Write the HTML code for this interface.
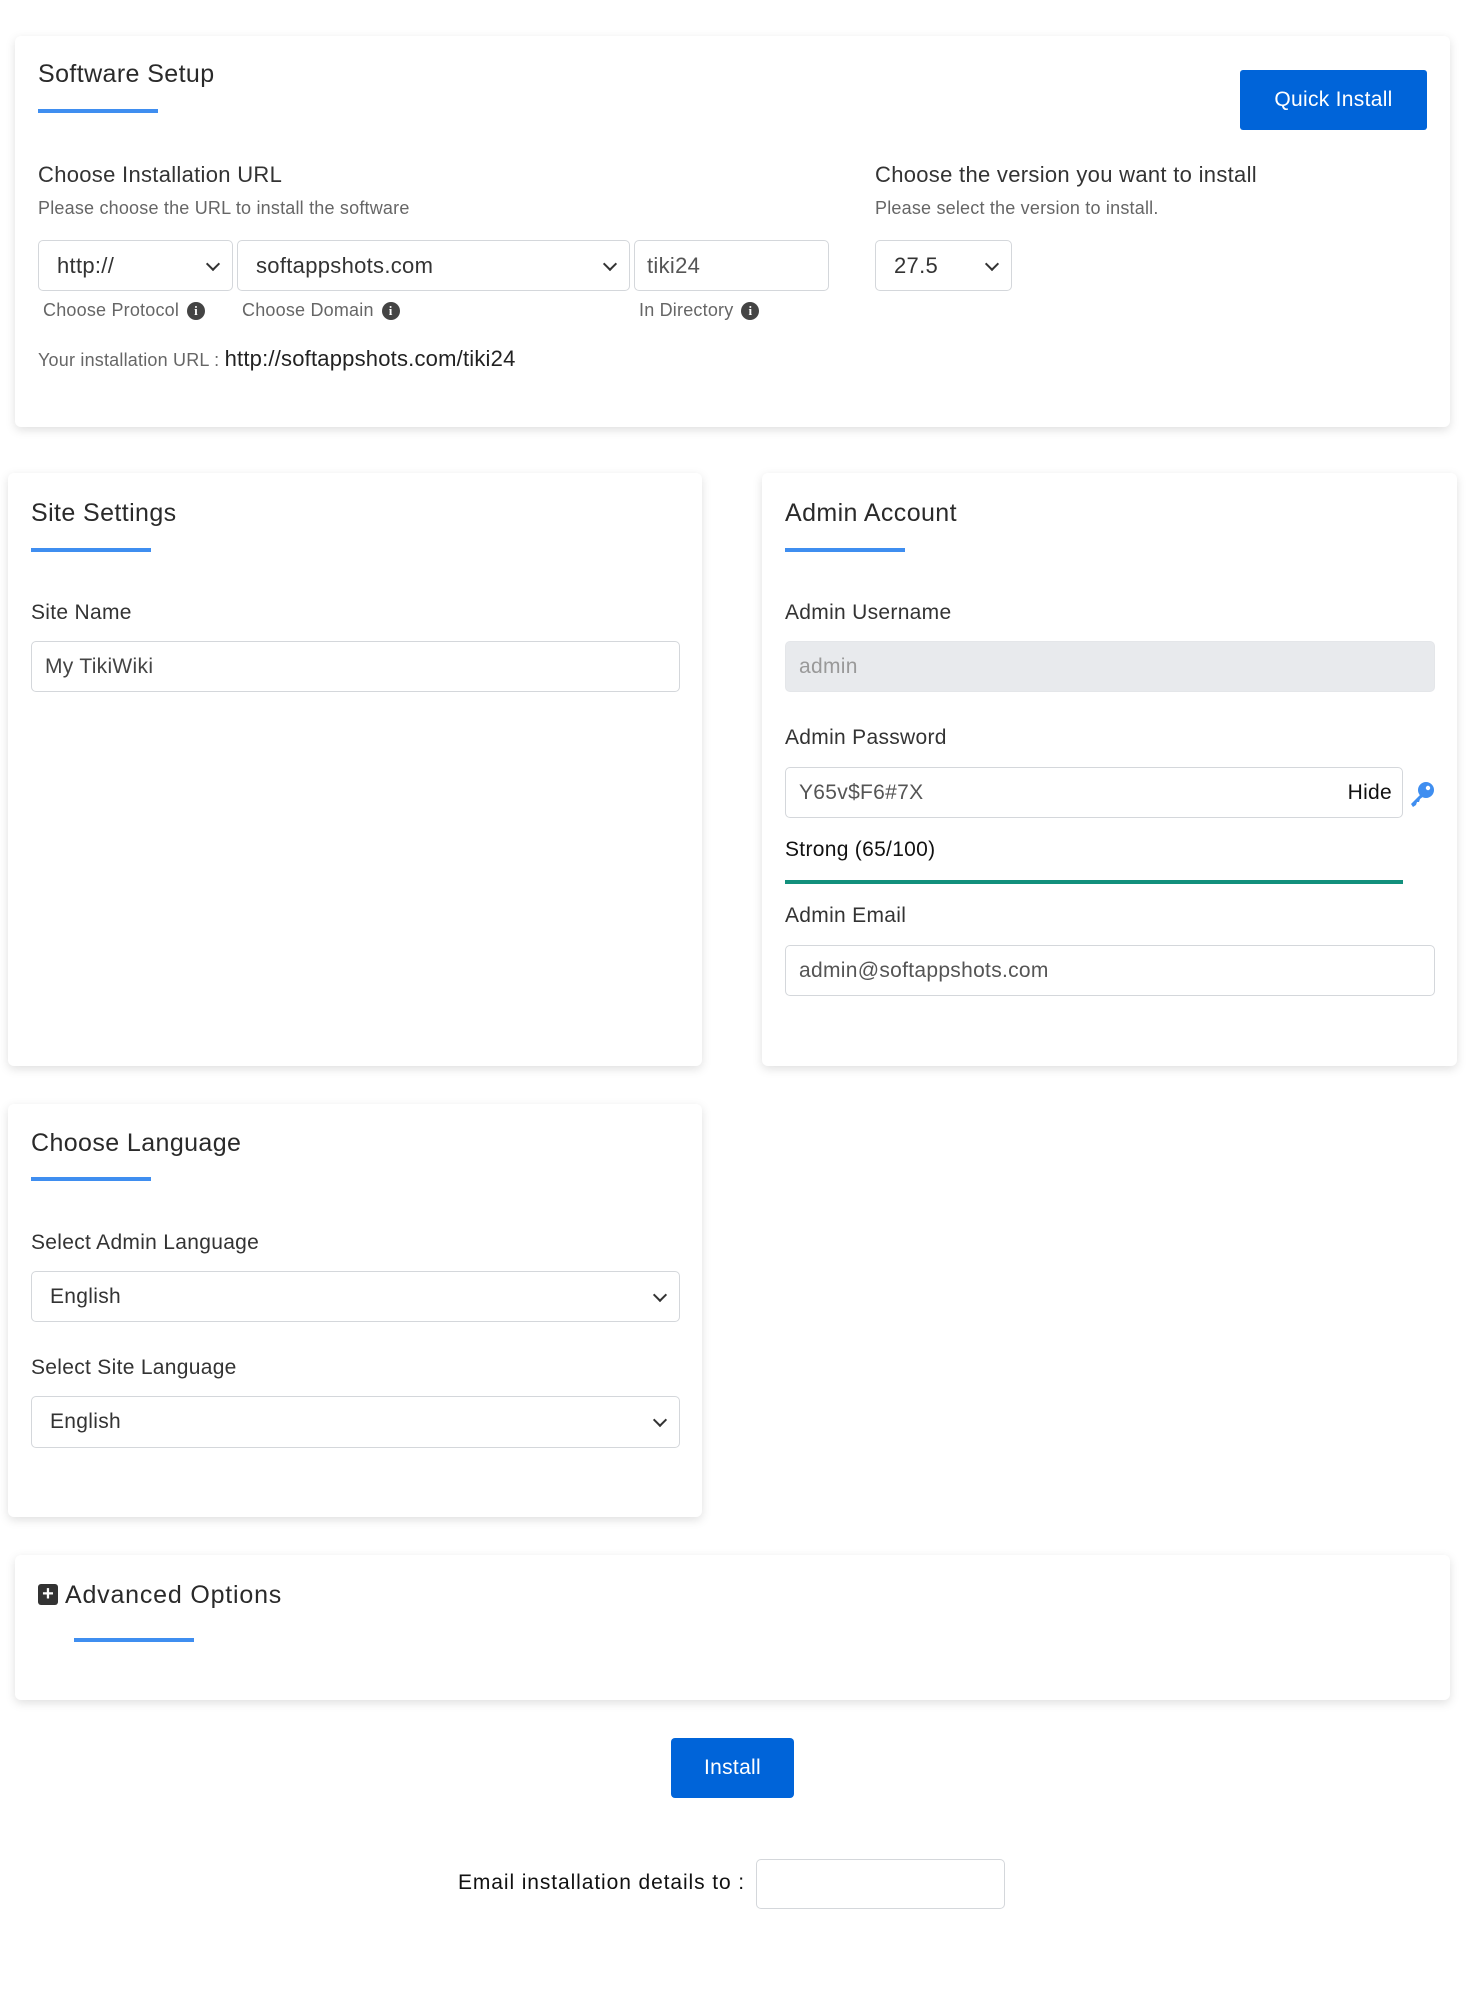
<!DOCTYPE html>
<html><head><meta charset="utf-8"><style>
*{box-sizing:border-box;margin:0;padding:0}
body{width:1466px;height:2000px;background:#fff;font-family:"Liberation Sans",sans-serif;color:#222;position:relative;overflow:hidden}
.a{position:absolute}
.card{position:absolute;background:#fff;border-radius:6px;box-shadow:0 3px 10px rgba(0,0,0,.13)}
.t{position:absolute;font-size:25px;color:#2a2a2a;white-space:nowrap;letter-spacing:.4px}
.ul{position:absolute;height:4px;width:120px;background:#3f8ef0}
.lb{position:absolute;font-size:21px;color:#333;white-space:nowrap;letter-spacing:.3px}
.sm{position:absolute;font-size:18px;color:#666;white-space:nowrap;letter-spacing:.2px}
.in{position:absolute;border:1.5px solid #d4d7db;border-radius:5px;background:#fff;font-size:21px;color:#444;padding-left:13px;display:flex;align-items:center;letter-spacing:.3px}
.sel:after{content:"";position:absolute;right:14px;top:50%;width:8px;height:8px;border-right:2.5px solid #333;border-bottom:2.5px solid #333;transform:translateY(-70%) rotate(45deg)}
.btn{position:absolute;background:#0064d9;color:#fff;font-size:21px;display:flex;align-items:center;justify-content:center;border-radius:3px;letter-spacing:.3px}
.i{display:inline-block;width:18px;height:18px;border-radius:50%;background:#444;color:#fff;font-size:13px;font-weight:bold;text-align:center;line-height:18px;vertical-align:middle;margin-left:8px;font-family:"Liberation Serif",serif}
</style></head><body>

<div class="card" style="left:15px;top:36px;width:1435px;height:391px"></div>
<div class="t" style="left:38px;top:60px">Software Setup</div>
<div class="ul" style="left:38px;top:109px"></div>
<div class="btn" style="left:1240px;top:70px;width:187px;height:60px">Quick Install</div>
<div class="lb" style="left:38px;top:162px;font-size:22px">Choose Installation URL</div>
<div class="sm" style="left:38px;top:198px">Please choose the URL to install the software</div>
<div class="lb" style="left:875px;top:162px;font-size:22px">Choose the version you want to install</div>
<div class="sm" style="left:875px;top:198px">Please select the version to install.</div>
<div class="in sel" style="left:38px;top:240px;width:195px;height:51px;padding-left:18px;font-size:22px;color:#333">http://</div>
<div class="in sel" style="left:237px;top:240px;width:393px;height:51px;padding-left:18px;font-size:22px;color:#333">softappshots.com</div>
<div class="in" style="left:634px;top:240px;width:195px;height:51px;padding-left:12px;font-size:22px;color:#555">tiki24</div>
<div class="in sel" style="left:875px;top:240px;width:137px;height:51px;padding-left:18px;font-size:22px;color:#333">27.5</div>
<div class="sm" style="left:43px;top:300px">Choose Protocol<span class="i">i</span></div>
<div class="sm" style="left:242px;top:300px">Choose Domain<span class="i">i</span></div>
<div class="sm" style="left:639px;top:300px">In Directory<span class="i">i</span></div>
<div class="sm" style="left:38px;top:346px">Your installation URL : <span style="font-size:22px;color:#222">http://softappshots.com/tiki24</span></div>

<div class="card" style="left:8px;top:473px;width:694px;height:593px"></div>
<div class="t" style="left:31px;top:499px">Site Settings</div>
<div class="ul" style="left:31px;top:548px"></div>
<div class="lb" style="left:31px;top:601px">Site Name</div>
<div class="in" style="left:31px;top:641px;width:649px;height:51px;color:#444">My TikiWiki</div>

<div class="card" style="left:762px;top:473px;width:695px;height:593px"></div>
<div class="t" style="left:785px;top:499px">Admin Account</div>
<div class="ul" style="left:785px;top:548px"></div>
<div class="lb" style="left:785px;top:601px">Admin Username</div>
<div class="in" style="left:785px;top:641px;width:650px;height:51px;background:#e8eaed;border-color:#e4e6e9;color:#999">admin</div>
<div class="lb" style="left:785px;top:726px">Admin Password</div>
<div class="in" style="left:785px;top:767px;width:618px;height:51px;color:#555">Y65v$F6#7X<span style="position:absolute;right:10px;color:#111">Hide</span></div>
<svg class="a" style="left:1408px;top:780px" width="28" height="28" viewBox="0 0 28 28"><circle cx="18" cy="10" r="8" fill="#3f8ef0"/><path d="M13 14 L3 24 L5 27 L8 25 L9 22 L11 22 L12 19 L16 16Z" fill="#3f8ef0"/><circle cx="20" cy="8" r="2.2" fill="#fff"/></svg>
<div class="lb" style="left:785px;top:838px;color:#111">Strong (65/100)</div>
<div class="a" style="left:785px;top:880px;width:618px;height:4px;background:#12907c"></div>
<div class="lb" style="left:785px;top:904px">Admin Email</div>
<div class="in" style="left:785px;top:945px;width:650px;height:51px;color:#555">admin@softappshots.com</div>

<div class="card" style="left:8px;top:1104px;width:694px;height:413px"></div>
<div class="t" style="left:31px;top:1129px">Choose Language</div>
<div class="ul" style="left:31px;top:1177px"></div>
<div class="lb" style="left:31px;top:1231px">Select Admin Language</div>
<div class="in sel" style="left:31px;top:1271px;width:649px;height:51px;padding-left:18px;color:#333">English</div>
<div class="lb" style="left:31px;top:1356px">Select Site Language</div>
<div class="in sel" style="left:31px;top:1396px;width:649px;height:52px;padding-left:18px;color:#333">English</div>

<div class="card" style="left:15px;top:1555px;width:1435px;height:145px"></div>
<div class="a" style="left:38px;top:1584px;width:20px;height:21px;background:#333;border-radius:3px;color:#fff;font-size:20px;font-weight:bold;line-height:21px;text-align:center">+</div>
<div class="t" style="left:65px;top:1581px;letter-spacing:.8px">Advanced Options</div>
<div class="ul" style="left:74px;top:1638px"></div>

<div class="btn" style="left:671px;top:1738px;width:123px;height:60px;border-radius:4px">Install</div>
<div class="lb" style="left:458px;top:1871px;color:#111;letter-spacing:.9px">Email installation details to :</div>
<div class="in" style="left:756px;top:1859px;width:249px;height:50px"></div>
</body></html>
